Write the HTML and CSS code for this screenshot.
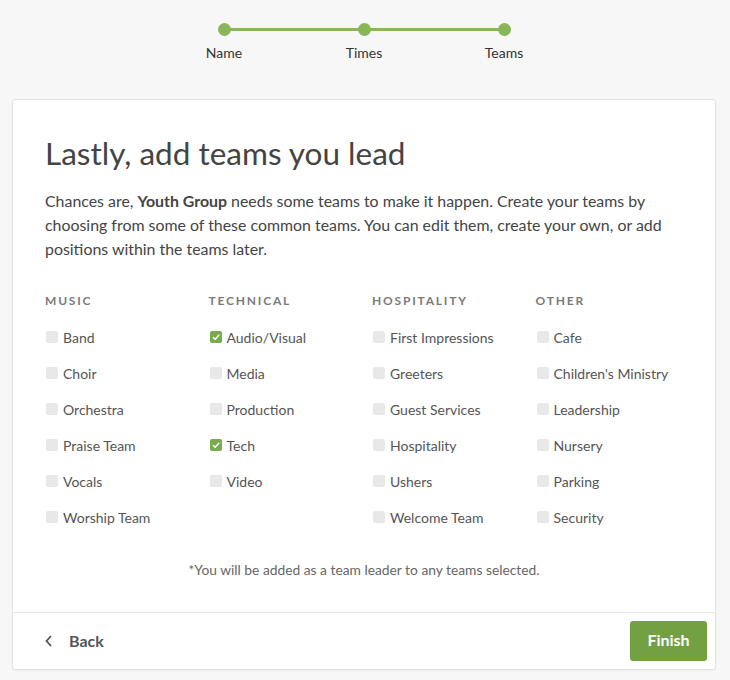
FILE: index.html
```html
<!DOCTYPE html>
<html>
<head>
<meta charset="utf-8">
<link rel="stylesheet" href="styles.css">
</head>
<body>
<div class="stepper">
  <div class="step"><span class="dot"></span><span class="step-label">Name</span></div>
  <div class="step"><span class="dot"></span><span class="step-label">Times</span></div>
  <div class="step"><span class="dot"></span><span class="step-label">Teams</span></div>
</div>
<div class="card">
  <div class="card-body">
    <h1 class="title">Lastly, add teams you lead</h1>
    <p class="intro">Chances are, <strong>Youth Group</strong> needs some teams to make it happen. Create your teams by choosing from some of these common teams. You can edit them, create your own, or add positions within the teams later.</p>
    <div class="teams">
      <div class="col">
        <div class="col-head">Music</div>
        <div class="opt"><span class="box"></span>Band</div>
        <div class="opt"><span class="box"></span>Choir</div>
        <div class="opt"><span class="box"></span>Orchestra</div>
        <div class="opt"><span class="box"></span>Praise Team</div>
        <div class="opt"><span class="box"></span>Vocals</div>
        <div class="opt"><span class="box"></span>Worship Team</div>
      </div>
      <div class="col">
        <div class="col-head">Technical</div>
        <div class="opt"><span class="box checked"><svg viewBox="0 0 12 12" width="12" height="12"><polyline points="3,6.2 5.2,8.3 9.2,3.8" fill="none" stroke="#fff" stroke-width="1.4"/></svg></span>Audio/Visual</div>
        <div class="opt"><span class="box"></span>Media</div>
        <div class="opt"><span class="box"></span>Production</div>
        <div class="opt"><span class="box checked"><svg viewBox="0 0 12 12" width="12" height="12"><polyline points="3,6.2 5.2,8.3 9.2,3.8" fill="none" stroke="#fff" stroke-width="1.4"/></svg></span>Tech</div>
        <div class="opt"><span class="box"></span>Video</div>
      </div>
      <div class="col">
        <div class="col-head">Hospitality</div>
        <div class="opt"><span class="box"></span>First Impressions</div>
        <div class="opt"><span class="box"></span>Greeters</div>
        <div class="opt"><span class="box"></span>Guest Services</div>
        <div class="opt"><span class="box"></span>Hospitality</div>
        <div class="opt"><span class="box"></span>Ushers</div>
        <div class="opt"><span class="box"></span>Welcome Team</div>
      </div>
      <div class="col">
        <div class="col-head">Other</div>
        <div class="opt"><span class="box"></span>Cafe</div>
        <div class="opt"><span class="box"></span>Children's Ministry</div>
        <div class="opt"><span class="box"></span>Leadership</div>
        <div class="opt"><span class="box"></span>Nursery</div>
        <div class="opt"><span class="box"></span>Parking</div>
        <div class="opt"><span class="box"></span>Security</div>
      </div>
    </div>
    <p class="note">*You will be added as a team leader to any teams selected.</p>
  </div>
  <div class="card-footer">
    <a class="back"><svg viewBox="0 0 8 12" width="8" height="12"><polyline points="6,1 1.5,6 6,11" fill="none" stroke="#555" stroke-width="1.8"/></svg><span>Back</span></a>
    <button class="finish">Finish</button>
  </div>
</div>
</body>
</html>
```
FILE: styles.css
```css
html, body {
  margin: 0;
  padding: 0;
}
body {
  background: #f7f7f7;
  font-family: Lato, "Open Sans", "Liberation Sans", sans-serif;
  color: #444;
  width: 730px;
  height: 680px;
  overflow: hidden;
}
.stepper {
  position: relative;
  display: grid;
  grid-template-columns: repeat(3, 140px);
  width: 420px;
  margin: 0 0 0 154px;
  padding-top: 23px;
  height: 99px;
  box-sizing: border-box;
}
.stepper::before {
  content: "";
  position: absolute;
  left: 70px;
  right: 70px;
  top: 28px;
  height: 3px;
  background: #8ab65a;
}
.step {
  display: flex;
  flex-direction: column;
  align-items: center;
  position: relative;
}
.dot {
  width: 13px;
  height: 13px;
  border-radius: 50%;
  background: #8ab65a;
}
.step-label {
  margin-top: 8px;
  font-size: 14px;
  line-height: 18px;
  color: #333;
}
.card {
  margin-left: 12px;
  width: 704px;
  background: #fff;
  border: 1px solid #e3e3e3;
  border-radius: 3px;
  box-sizing: border-box;
  box-shadow: 0 1px 2px rgba(0,0,0,0.04);
}
.card-body {
  padding: 35px 32px 32px 32px;
}
.title {
  margin: 0;
  font-size: 31.5px;
  line-height: 36px;
  font-weight: 400;
  color: #444;
}
.intro {
  margin: 18px 0 0 0;
  font-size: 15.9px;
  line-height: 24px;
  color: #444;
}
.intro strong {
  font-weight: 700;
}
.teams {
  display: grid;
  grid-template-columns: repeat(4, 163.5px);
  margin-top: 32px;
}
.col-head {
  font-size: 12px;
  line-height: 16px;
  font-weight: 700;
  letter-spacing: 1.8px;
  text-transform: uppercase;
  color: #7a7a7a;
  margin-bottom: 10px;
}
.opt {
  display: flex;
  align-items: center;
  height: 36px;
  font-size: 14px;
  color: #555;
}
.box {
  width: 12px;
  height: 12px;
  margin-left: 1px;
  margin-right: 5px;
  border-radius: 2px;
  background: #e8e8e8;
  display: flex;
  flex-shrink: 0;
}
.box.checked {
  background: #79aa4d;
}
.note {
  margin: 25px 0 0 0;
  text-align: center;
  font-size: 13.8px;
  line-height: 20px;
  color: #666;
}
.card-footer {
  border-top: 1px solid #e6e6e6;
  display: flex;
  justify-content: space-between;
  align-items: center;
  padding: 8px 8px 8px 32px;
}
.back {
  display: flex;
  align-items: center;
  gap: 16px;
  font-size: 16px;
  line-height: 20px;
  font-weight: 700;
  color: #555;
  margin-top: -1px;
}
.finish {
  height: 40px;
  width: 77px;
  border: none;
  border-radius: 3px;
  background: #72a043;
  color: #fff;
  font-family: Lato, "Open Sans", "Liberation Sans", sans-serif;
  font-size: 16px;
  line-height: 38px;
  font-weight: 700;
  padding: 0 0 2px 0;
}
```
